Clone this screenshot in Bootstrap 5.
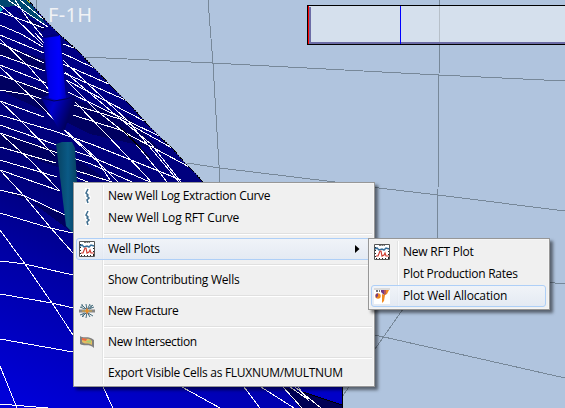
<!DOCTYPE html>
<html lang="en">
<head>
<meta charset="utf-8">
<title>Reservoir view</title>
<link href="https://cdn.jsdelivr.net/npm/bootstrap@5.3.0/dist/css/bootstrap.min.css" rel="stylesheet">
<style>
body{width:565px;height:408px;background:#b0c4de;font-family:"Open Sans","Noto Sans",sans-serif;font-size:12px;color:#000}
.scene{width:565px;height:408px}
.well-name{left:48px;top:1px;font:20px/28px "Noto Sans",sans-serif;color:#f0f2f5;letter-spacing:.3px;white-space:nowrap}
.legend-box{left:307px;top:5px;width:262px;height:40px;border:1px solid #000;background:rgba(255,255,255,.47)}
.legend-box .edge{inset:0;border-left:1px solid red}
.legend-box .shade{left:1px;top:1px;right:0;bottom:0;border-left:2px solid #6c6ca6;border-bottom:2px solid #6c6ca6}
.legend-box .tick{left:92px;top:0;bottom:0;width:1px;background:#00f}
.ctx{border:1px solid #979797;background:#f0f0f0;box-shadow:inset 0 0 0 1px #f5f5f5,3px 3px 3px rgba(0,0,0,.5);padding:2px}
.ctx-main{left:73px;top:182px;width:302px;height:205px}
.ctx-sub{left:368px;top:238px;width:182px;height:72px}
.ctx::before{content:"";position:absolute;left:28px;top:2px;bottom:2px;width:2px;background:linear-gradient(90deg,#e2e3e3 50%,#fff 50%)}
.entry{height:22px;line-height:20px;padding-left:2px;border:1px solid transparent;border-radius:3px;white-space:nowrap;position:relative;letter-spacing:-.28px}
.entry .pic{width:16px;height:16px;flex:none;margin-right:13px}
.fit-a{letter-spacing:-.14px}
.fit-b{letter-spacing:-.22px}
.fit-c{letter-spacing:-.38px}
.entry.hot{border-color:#aecff7;background:linear-gradient(rgba(240,244,250,.8),rgba(224,232,244,.75))}
.ctx-sub .entry{margin-right:1px}
.rule{height:9px;padding:4px 0 0 28px}
.rule::before{content:"";display:block;height:2px;background:linear-gradient(#e0e0e0 50%,#fff 50%)}
.arrow{margin-left:auto;margin-right:11px}
</style>
<script src="https://cdn.jsdelivr.net/npm/bootstrap@5.3.0/dist/js/bootstrap.bundle.min.js"></script>
</head>
<body class="m-0 overflow-hidden">
<main class="scene position-relative overflow-hidden">
<svg class="d-block" width="565" height="408" viewBox="0 0 565 408">
 <defs>
  <linearGradient id="sea" gradientUnits="userSpaceOnUse" x1="150" y1="100" x2="20" y2="400"><stop offset="0" stop-color="#000084"/><stop offset=".35" stop-color="#000078"/><stop offset=".6" stop-color="#0000a4"/><stop offset="1" stop-color="#0000d8"/></linearGradient>
  <linearGradient id="shaft"><stop offset="0" stop-color="#0000a8"/><stop offset=".3" stop-color="#0000e8"/><stop offset=".7" stop-color="#0000ff"/><stop offset="1" stop-color="#0000b4"/></linearGradient>
  <linearGradient id="cone" x2=".9" y2=".35"><stop offset="0" stop-color="#000078"/><stop offset=".45" stop-color="#0000cc"/><stop offset="1" stop-color="#00005c"/></linearGradient>
  <linearGradient id="pipe"><stop offset="0" stop-color="#064060"/><stop offset=".5" stop-color="#0a5a86"/><stop offset="1" stop-color="#063a58"/></linearGradient>
  <clipPath id="land"><path d="M0 0H28L47 22 60 35 78 51 95 69 113 88 132 107 148 125 160 137 172 148 184 162 195 173 203 182 342 330V400L343 408H0Z"/></clipPath>
 </defs>
 <g fill="none" stroke="#778899" shape-rendering="crispEdges">
  <path d="M36 0L37 14M85 57L212 63 439 75 565 81M208 0L213 64 220 182M440 0L439 75 438 190 437 240M187 163L220 168 335 182M370 187L438 195 565 211M545 282L565 284M370 334L384 337 565 378M403 309L375 349 342 397"/>
 </g>
 <g clip-path="url(#land)" shape-rendering="crispEdges">
  <path fill="url(#sea)" d="M0 0H350V408H0Z"/>
  <path fill="#000060" d="M0 43L45 60V72L0 55ZM0 75L70 98 130 118 160 150 90 134 0 90ZM0 133L70 154 110 182 60 168 0 147ZM0 190L25 197 73 233V219L60 212ZM15 10L46 28 43 32Z"/>
  <path fill="#004870" d="M0 0H28L46 24 31 17 19 6 0 7Z"/><path fill="#00a7bd" d="M0 7L3 9 1 12 0 12Z"/><path fill="#d8df15" d="M26 0H31L30 3Z"/>
  <path fill="#000054" d="M283 387L303 392 342 405V408H300Z"/><path fill="#0000c8" d="M290 380H345V406L303 392Z"/>
  <path fill="none" stroke="#fff" d="M0 12L44 28M8 0L48 27M15 0L28 19 43 37M0 5L13 16 43 45M0 25L21 34 43 47M63 44L74 48M0 35L44 53M62 53L94 68M0 43L44 63M63 64L111 85M0 55L45 71M64 73L130 102M0 65L46 83M66 80L148 123M0 75L49 93M68 92L159 136M0 90L30 95 48 101M74 105L120 119 172 148M0 101L44 117M73 115L120 130 195 170M0 115L54 131 91 144 181 180M0 125L54 144 92 157 150 182M0 133L55 152 91 164 132 182M0 147L56 163M74 170L112 182M0 160L57 177M75 177L88 182M0 170L60 191M0 190L25 196 65 215M0 213L50 228 73 233M0 261L9 262 25 264 73 275M0 294L52 303 73 308M0 339L73 352M0 404L48 408"/>
  <path fill="none" stroke="#fff" d="M0 39L30 68 58 100M0 67L38 103 69 135 100 164 118 182M0 101L20 120 55 156M0 133L30 160 59 190M0 170L25 197 50 227 73 253M0 230L25 264 52 303 73 335M0 366L17 408M63 60L88 84 128 121 179 182M65 72L118 117 151 144 181 182M66 80L96 110 130 137 160 173 167 182M75 102L106 134 146 176 151 182M20 0L43 19M35 33L45 44M65 130L95 157 110 180M103 387L113 408M182 387L220 408M244 387L260 408M261 387L294 408M283 387L302 408M290 387L306 398M295 387L321 408M298 387L309 401"/>
  <path fill="none" stroke="#000" d="M303 392L342 405M120 127L150 158"/>
 </g>
 <path fill="none" stroke="#000" shape-rendering="crispEdges" stroke-dasharray="2 1" d="M28 0L47 22 60 35 78 51 95 69 113 88 132 107 148 125 160 137 172 148 184 162 195 173 203 182"/>
 <path fill="none" stroke="#000" shape-rendering="crispEdges" d="M342 385V400L343 408"/>
 <path fill="url(#cone)" d="M41 98L49 95 66 95 76 96 73 105 65 129 61 132 57 126Z"/>
 <path fill="url(#shaft)" d="M43 36L51 34 60 35 66 98 57 100 49 98Z"/><path fill="#000078" d="M43 36L51 34 59 34 59 36 44 38Z"/>
 <path fill="none" stroke="#000058" d="M42 98L54 101 66 99 75 96"/>
 <path fill="url(#pipe)" d="M56 144L62 142 72 142 75 148 80 234 72 232 66 226Z"/>
</svg>
<div class="well-name position-absolute">F-1H</div>
<div class="legend-box position-absolute"><div class="edge position-absolute"></div><div class="shade position-absolute"></div><div class="tick position-absolute"></div></div>

<div class="ctx ctx-main position-absolute">
 <div class="entry d-flex align-items-center"><svg class="pic" viewBox="0 0 16 16"><path d="M6 0H11V4L10 6 12 9 10 16H6L8 12 5 7Z" fill="#fff"/><path d="M9 1L8 3 7 5 9 7 8 8 10 10 8 12 9 15" fill="none" stroke="#3d6d8e" stroke-width="1.5"/></svg><span>New Well Log Extraction Curve</span></div>
 <div class="entry d-flex align-items-center"><svg class="pic" viewBox="0 0 16 16"><path d="M6 0H11V4L10 6 12 9 10 16H6L8 12 5 7Z" fill="#fff"/><path d="M9 1L8 3 7 5 9 7 8 8 10 10 8 12 9 15" fill="none" stroke="#3d6d8e" stroke-width="1.5"/></svg><span class="fit-a">New Well Log RFT Curve</span></div>
 <div class="rule"></div>
 <div class="entry hot d-flex align-items-center"><svg class="pic" viewBox="0 0 16 16"><path d="M.5.5H15.5V15.5H.5Z" fill="#fff" stroke="#555"/><path d="M1.5 3V15M2 14.5H15M14.5 4V14" stroke="#222" stroke-dasharray="1 2"/><path d="M5 1.5H11" stroke="#777" stroke-dasharray="2 .5"/><path d="M1 5L3 4 5 6 8 5 10 6 12 4 15 5" fill="none" stroke="#356d99" stroke-width="1.5"/><path d="M2 12H4L6 7 7 7 8 12 10 11 11 9 12 12 15 12" fill="none" stroke="#cf3d32" stroke-width="1.2"/></svg><span>Well Plots</span><svg class="arrow" width="5" height="8" viewBox="0 0 5 8"><path d="M0 0L4.5 4 0 8Z"/></svg></div>
 <div class="rule"></div>
 <div class="entry d-flex align-items-center"><span class="pic"></span><span class="fit-b">Show Contributing Wells</span></div>
 <div class="rule"></div>
 <div class="entry d-flex align-items-center"><svg class="pic" viewBox="0 0 16 16"><g fill="none" stroke="#456c7d"><path d="M8 7L7 1M8 7L11 1M7 6L3 2M9 6L14 2M6 6L1 4M10 6L15 4M8 9L7 15M8 9L11 14M7 10L3 14M9 10L14 13M6 10L1 12M3 4V1M12 5V2M4 11V14"/></g><path d="M0 6.5H16V9.5H0Z" fill="#888"/><path d="M3 8H13" stroke="#d3a642"/><circle cx="8" cy="8" r="1.7" fill="#f3a51c"/><path d="M8 5V11" stroke="#e1752c"/></svg><span class="fit-c">New Fracture</span></div>
 <div class="rule"></div>
 <div class="entry d-flex align-items-center"><svg class="pic" viewBox="0 0 16 16"><path d="M1 2C5 5 9 1 15 6V14C10 9 6 13 1 10Z" fill="#808080"/><path d="M3 4C7 6 10 3 13 7V11C9 8 6 11 3 8Z" fill="#e3bd61"/><path d="M3 4L8 5 7 7 3 6Z" fill="#ee6840"/><path d="M8 7L12 6 12 9 7 8Z" fill="#a5cf75"/></svg><span class="fit-c">New Intersection</span></div>
 <div class="rule"></div>
 <div class="entry d-flex align-items-center"><span class="pic"></span><span>Export Visible Cells as FLUXNUM/MULTNUM</span></div>
</div>

<div class="ctx ctx-sub position-absolute">
 <div class="entry d-flex align-items-center"><svg class="pic" viewBox="0 0 16 16"><path d="M.5.5H15.5V15.5H.5Z" fill="#fff" stroke="#555"/><path d="M1.5 3V15M2 14.5H15M14.5 4V14" stroke="#222" stroke-dasharray="1 2"/><path d="M5 1.5H11" stroke="#777" stroke-dasharray="2 .5"/><path d="M1 5L3 4 5 6 8 5 10 6 12 4 15 5" fill="none" stroke="#356d99" stroke-width="1.5"/><path d="M2 12H4L6 7 7 7 8 12 10 11 11 9 12 12 15 12" fill="none" stroke="#cf3d32" stroke-width="1.2"/></svg><span class="fit-b">New RFT Plot</span></div>
 <div class="entry d-flex align-items-center"><span class="pic"></span><span>Plot Production Rates</span></div>
 <div class="entry hot d-flex align-items-center"><svg class="pic" viewBox="0 0 16 16"><path d="M0 0H16V16H0Z" fill="#fff"/><path d="M0 0H16V2H0Z" fill="#dadada"/><path d="M2 2H4V4H2ZM5 2H6V4H5Z" fill="#777"/><circle cx="4" cy="8" r="2.7" fill="#f28a20"/><path d="M1.5 7A2.7 2.7 0 0 1 4 5.3V8L2 10Z" fill="#713c87"/><path d="M7 2H10L10 7 7 4Z" fill="#713c87"/><path d="M10 2H15L13 6 11 7 10 13 8 15V6L10 7Z" fill="#f28a20"/><path d="M10 2H12V6L10 7Z" fill="#b95657"/></svg><span class="fit-a">Plot Well Allocation</span></div>
</div>
</main>
</body>
</html>
